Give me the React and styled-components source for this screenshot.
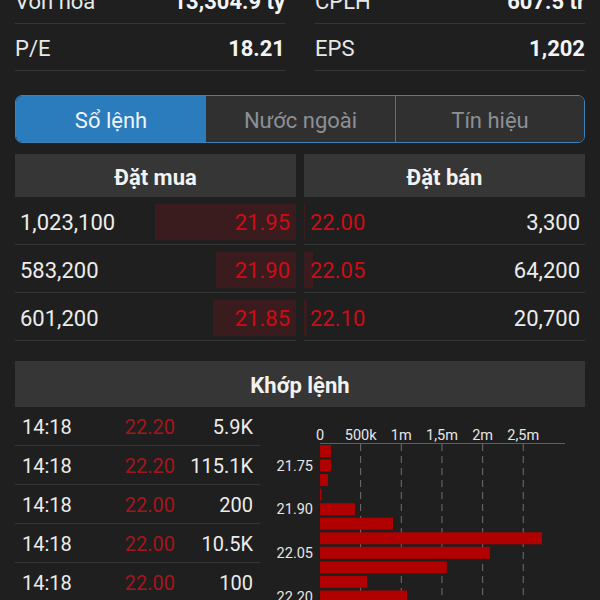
import React from 'react'
import styled, { createGlobalStyle } from 'styled-components'

const GlobalStyle = createGlobalStyle`
  html, body {
    margin: 0;
    padding: 0;
    background: #1f1f1f;
    overflow: hidden;
  }
  body {
    font-family: Roboto, "Liberation Sans", Arial, sans-serif;
    color: #ececec;
  }
`

const stats = [
  ['Vốn hoá', '13,304.9 tỷ', 'CPLH', '607.5 tr'],
  ['P/E', '18.21', 'EPS', '1,202'],
]

const bids = [
  { qty: 1023100, price: '21.95' },
  { qty: 583200, price: '21.90' },
  { qty: 601200, price: '21.85' },
]

const asks = [
  { qty: 3300, price: '22.00' },
  { qty: 64200, price: '22.05' },
  { qty: 20700, price: '22.10' },
]

const trades = [
  ['14:18', '22.20', '5.9K'],
  ['14:18', '22.20', '115.1K'],
  ['14:18', '22.00', '200'],
  ['14:18', '22.00', '10.5K'],
  ['14:18', '22.00', '100'],
  ['14:18', '22.00', '3.2K'],
]

// volume by price step (21.70 .. 22.20)
const volumes = [135000, 135000, 98000, 18000, 430000, 898000, 2730000, 2090000, 1560000, 578000, 1070000]
const BOOK_SCALE = 2040000

const fmt = (n) => n.toLocaleString('en-US')

const App = () => {
  return (
    <>
      <GlobalStyle />
      <Page>
        <Stats>
          {stats.map((s) => (
            <React.Fragment key={s[0]}>
              <StatRow>
                <Label>{s[0]}</Label>
                <Value>{s[1]}</Value>
              </StatRow>
              <StatRow>
                <Label>{s[2]}</Label>
                <Value>{s[3]}</Value>
              </StatRow>
            </React.Fragment>
          ))}
        </Stats>

        <Tabs>
          <Tab active>Sổ lệnh</Tab>
          <Tab>Nước ngoài</Tab>
          <Tab divider>Tín hiệu</Tab>
        </Tabs>

        <Book>
          <Side>
            <Header>Đặt mua</Header>
            {bids.map((b) => (
              <BookRow key={b.price}>
                <Bar side="left" style={{ width: `${(b.qty / BOOK_SCALE) * 100}%` }} />
                <Qty>{fmt(b.qty)}</Qty>
                <Price>{b.price}</Price>
              </BookRow>
            ))}
          </Side>
          <Side>
            <Header>Đặt bán</Header>
            {asks.map((a) => (
              <BookRow key={a.price} ask>
                <Bar side="right" style={{ width: `${(a.qty / BOOK_SCALE) * 100}%` }} />
                <Price>{a.price}</Price>
                <Qty>{fmt(a.qty)}</Qty>
              </BookRow>
            ))}
          </Side>
        </Book>

        <Match>
          <Header tall>Khớp lệnh</Header>
          <MatchBody>
            <Trades>
              {trades.map((t, i) => (
                <TradeRow key={i}>
                  <span>{t[0]}</span>
                  <TradePrice>{t[1]}</TradePrice>
                  <TradeVol>{t[2]}</TradeVol>
                </TradeRow>
              ))}
            </Trades>
            <VolumeChart />
          </MatchBody>
        </Match>
      </Page>
    </>
  )
}

const VolumeChart = () => {
  const x0 = 60
  const unit = 81.3 / 1000000
  const ticks = ['0', '500k', '1m', '1,5m', '2m', '2,5m']
  const labels = { 1: '21.75', 4: '21.90', 7: '22.05', 10: '22.20' }
  return (
    <Chart width="325" height="200" viewBox="0 0 325 200">
      {ticks.map((t, i) => {
        const x = x0 + i * 40.65
        return (
          <g key={t}>
            <text x={x} y="33" fill="#e6e6e6" fontSize="14.5" textAnchor="middle">{t}</text>
            {i > 0 && (
              <line x1={x} y1="37" x2={x} y2="200" stroke="#707070" strokeWidth="1" strokeDasharray="7 5" />
            )}
          </g>
        )
      })}
      <line x1={x0} y1="36.5" x2="305" y2="36.5" stroke="#606060" strokeWidth="1" />
      {volumes.map((v, i) => {
        const y = 38 + i * 14.55
        return (
          <g key={i}>
            <rect x={x0} y={y} width={Math.max(v * unit, 1)} height="12" fill="#b10000" />
            {labels[i] && (
              <text x="53" y={y + 11} fill="#e6e6e6" fontSize="14.5" textAnchor="end">{labels[i]}</text>
            )}
          </g>
        )
      })}
    </Chart>
  )
}

export default App

const Page = styled.div`
  padding: 0 15px;
  box-sizing: border-box;
  width: 600px;
`

const Stats = styled.div`
  display: grid;
  grid-template-columns: 1fr 1fr;
  column-gap: 30px;
  margin-top: -23px;
`

const StatRow = styled.div`
  height: 47px;
  box-sizing: border-box;
  display: flex;
  justify-content: space-between;
  align-items: center;
  padding-top: 3px;
  border-bottom: 1px solid #363636;
  font-size: 22px;
`

const Label = styled.span`
  color: #e8e8e8;
`

const Value = styled.span`
  font-weight: 700;
  color: #f4f4f4;
`

const Tabs = styled.div`
  margin-top: 24px;
  height: 48px;
  box-sizing: border-box;
  border: 1.5px solid #3c82b8;
  border-radius: 7px;
  overflow: hidden;
  display: grid;
  grid-template-columns: 190px 1fr 1fr;
`

const Tab = styled.div`
  display: flex;
  align-items: center;
  justify-content: center;
  padding-top: 2px;
  font-size: 22px;
  background: ${(p) => (p.active ? '#2a7cbd' : '#303030')};
  color: ${(p) => (p.active ? '#eef4fa' : '#8b9096')};
  border-left: ${(p) => (p.divider ? '1px solid #6a6a6a' : 'none')};
`

const Book = styled.div`
  margin-top: 11px;
  display: grid;
  grid-template-columns: 1fr 1fr;
  column-gap: 8px;
`

const Side = styled.div`
  display: flex;
  flex-direction: column;
`

const Header = styled.div`
  height: ${(p) => (p.tall ? '46px' : '43px')};
  box-sizing: border-box;
  padding-top: 3px;
  background: #363636;
  display: flex;
  align-items: center;
  justify-content: center;
  font-size: 22px;
  font-weight: 700;
  color: #f2f2f2;
`

const BookRow = styled.div`
  position: relative;
  height: 48px;
  box-sizing: border-box;
  display: flex;
  justify-content: space-between;
  align-items: center;
  padding: 4px ${(p) => (p.ask ? '5px 0 6px' : '6px 0 5px')};
  border-bottom: 1px solid #363636;
  font-size: 22px;
`

const Bar = styled.div`
  position: absolute;
  top: 7px;
  bottom: 4px;
  ${(p) => (p.side === 'left' ? 'right: 0;' : 'left: 0;')}
  background: #3a1c1e;
`

const Qty = styled.span`
  position: relative;
  color: #ececec;
`

const Price = styled.span`
  position: relative;
  color: #cc0d16;
`

const Match = styled.div`
  margin-top: 20px;
  display: flex;
  flex-direction: column;
`

const MatchBody = styled.div`
  display: grid;
  grid-template-columns: 245px 1fr;
`

const Trades = styled.div`
  display: flex;
  flex-direction: column;
`

const TradeRow = styled.div`
  height: 39px;
  box-sizing: border-box;
  display: grid;
  grid-template-columns: 76px 77px 78px;
  align-items: center;
  padding: 2px 0 0 7px;
  border-bottom: 1px solid #363636;
  font-size: 20px;
  color: #ececec;
`

const TradePrice = styled.span`
  text-align: right;
  color: #a3161b;
`

const TradeVol = styled.span`
  text-align: right;
`

const Chart = styled.svg`
  display: block;
  font-family: Roboto, "Liberation Sans", Arial, sans-serif;
`
